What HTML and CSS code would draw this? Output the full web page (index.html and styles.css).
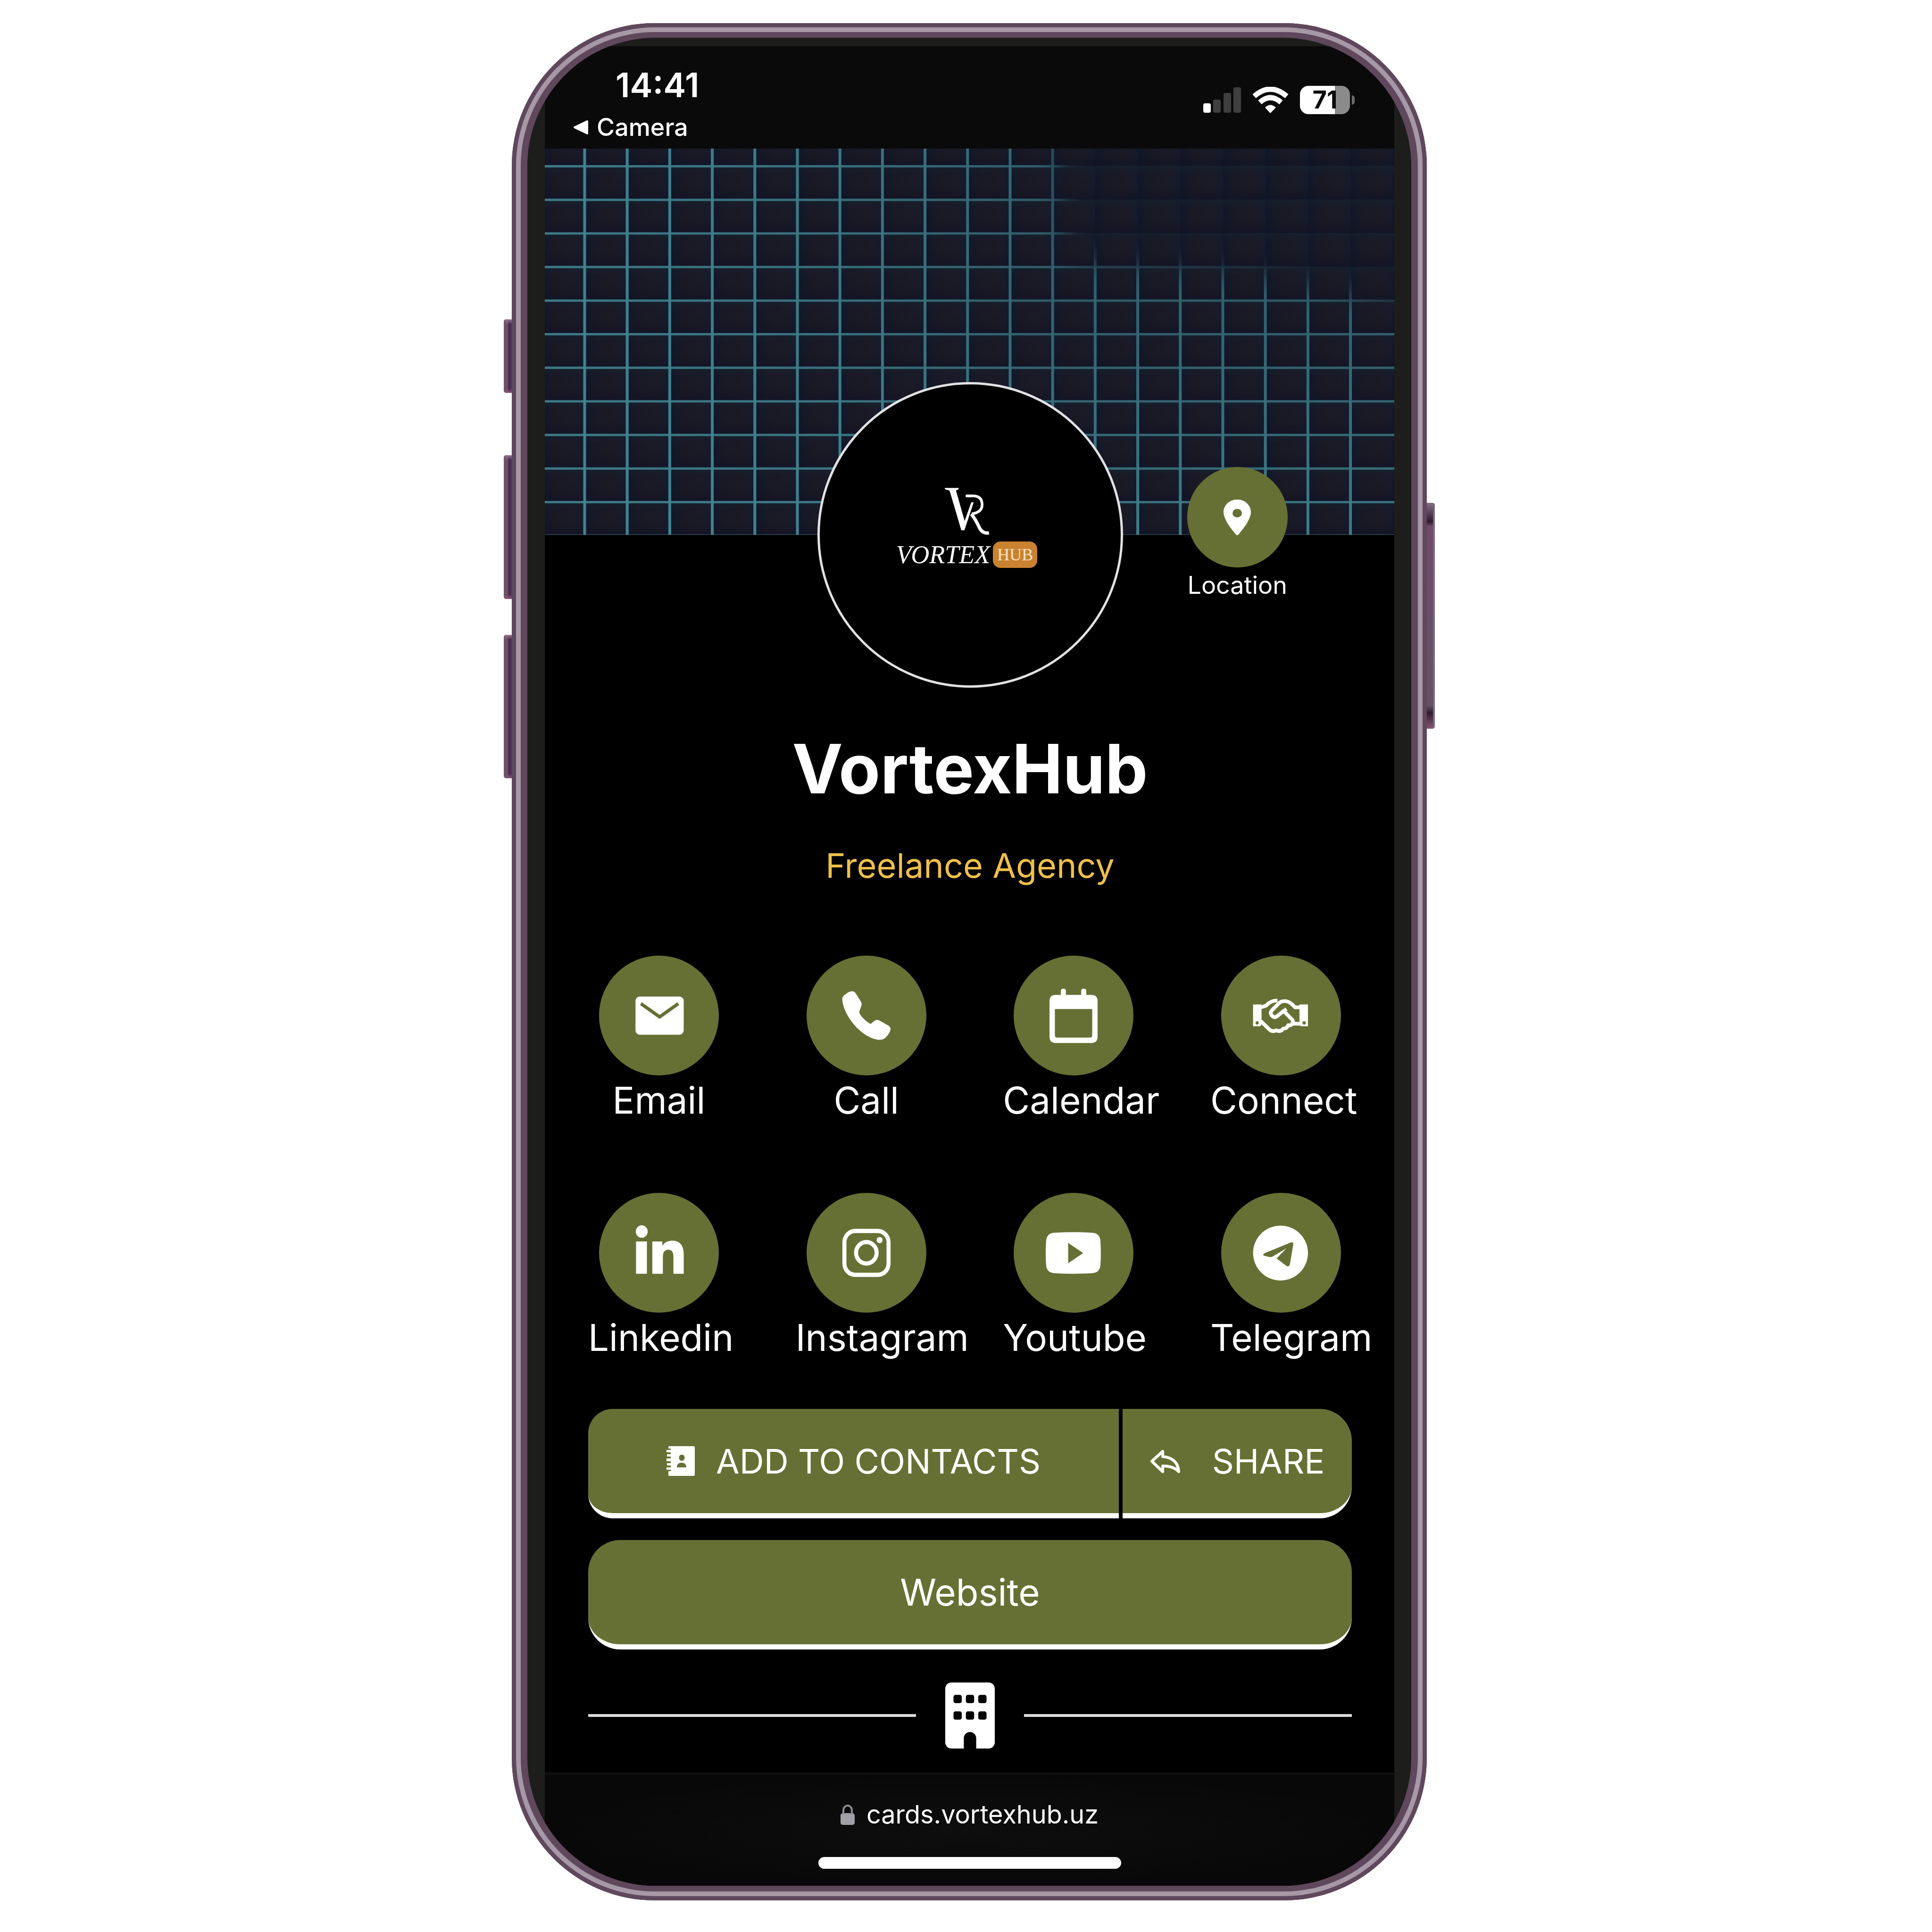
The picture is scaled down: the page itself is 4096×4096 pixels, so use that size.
FILE: index.html
```html
<!DOCTYPE html>
<html lang="en">
<head>
<meta charset="utf-8">
<meta name="viewport" content="width=device-width, initial-scale=1">
<title>VortexHub</title>
<link rel="stylesheet" href="styles.css">
</head>
<body>
<div class="phone">
  <span class="key key-mute"></span>
  <span class="key key-up"></span>
  <span class="key key-down"></span>
  <span class="key key-power"></span>
  <div class="bezel">
    <div class="screen">
      <header class="status">
        <div class="status-left">
          <time class="clock">14:41</time>
          <a class="back" href="#camera">
            <svg class="back-arrow" viewBox="0 0 33 34" aria-hidden="true"><path d="M3 17 30 4v26z" fill="#fff" stroke="#fff" stroke-width="4" stroke-linejoin="round"/></svg>
            Camera
          </a>
        </div>
        <div class="status-right">
          <svg class="signal" viewBox="0 0 80 54" aria-hidden="true">
            <rect x="0" y="34" width="16" height="20" rx="4" fill="#fff"/>
            <rect x="21" y="26" width="16" height="28" rx="4" fill="#3f3f40"/>
            <rect x="43" y="12" width="16" height="42" rx="4" fill="#3f3f40"/>
            <rect x="64" y="0" width="16" height="54" rx="4" fill="#3f3f40"/>
          </svg>
          <svg class="wifi" viewBox="0 0 77 56" aria-hidden="true">
            <g fill="none" stroke="#fff" stroke-width="11">
              <path d="M4 20Q38-10 73 20"/>
              <path d="M16 33Q38 13 61 33"/>
            </g>
            <path d="M27 44Q38 33 50 44L38 56z" fill="#fff"/>
          </svg>
          <div class="battery"><span class="battery-level">71</span></div>
        </div>
      </header>

      <svg class="cover" viewBox="0 0 1802 819" preserveAspectRatio="xMidYMid slice" aria-hidden="true">
        <defs>
          <linearGradient id="tileX" x1="0" x2="1" y1="0" y2="0">
            <stop offset="0" stop-color="#0e182a"/><stop offset=".25" stop-color="#191926"/>
            <stop offset=".75" stop-color="#1b1a27"/><stop offset="1" stop-color="#131c2d"/>
          </linearGradient>
          <linearGradient id="tileY" x1="0" x2="0" y1="0" y2="1">
            <stop offset="0" stop-color="#15232f" stop-opacity=".7"/><stop offset=".3" stop-color="#1b1a27" stop-opacity="0"/>
            <stop offset=".7" stop-color="#14121f" stop-opacity=".2"/><stop offset="1" stop-color="#101427" stop-opacity=".8"/>
          </linearGradient>
          <pattern id="tiles" x="85" y="37" width="90.2" height="71.2" patternUnits="userSpaceOnUse">
            <rect width="91" height="72" fill="url(#tileX)"/>
            <rect width="91" height="72" fill="url(#tileY)"/>
          </pattern>
          <pattern id="cols" x="82" y="0" width="90.2" height="819" patternUnits="userSpaceOnUse">
            <rect width="6" height="819" fill="#428593"/>
          </pattern>
          <pattern id="rows" x="0" y="35" width="1802" height="71.2" patternUnits="userSpaceOnUse">
            <rect width="1802" height="5" fill="#3d7987"/>
          </pattern>
          <linearGradient id="fade" x1="0" x2="1" y1="0" y2="0">
            <stop offset="0" stop-color="#fff"/><stop offset=".35" stop-color="#ddd"/><stop offset=".6" stop-color="#aaa"/><stop offset="1" stop-color="#aaa"/>
          </linearGradient>
          <linearGradient id="glow" x1="0" x2="0" y1="0" y2="1">
            <stop offset=".4" stop-color="#fff" stop-opacity="0"/><stop offset="1" stop-color="#fff" stop-opacity=".8"/>
          </linearGradient>
          <filter id="soft"><feGaussianBlur stdDeviation="26"/></filter>
          <mask id="lit" maskUnits="userSpaceOnUse" x="0" y="0" width="1802" height="819">
            <rect width="1802" height="819" fill="url(#fade)"/>
            <rect width="1802" height="819" fill="url(#glow)"/>
            <path d="M1080-90L1110 240 1500 265 1900 350V-90z" fill="#000" filter="url(#soft)"/>
          </mask>
        </defs>
        <rect width="1802" height="819" fill="url(#tiles)"/>
        <g mask="url(#lit)">
          <rect width="1802" height="819" fill="url(#rows)"/>
          <rect width="1790" height="819" fill="url(#cols)"/>
        </g>
      </svg>

      <main class="card">
        <section class="profile">
          <div class="avatar">
            <svg class="monogram" viewBox="685 545 203 215" aria-hidden="true">
              <path d="M687 546h62v6l-12 5 39 138 30-84h11l-42 126h-14L708 558l-21-6z" fill="#fff"/>
              <path d="M781 582h38q36 3 36 40 0 34-47 41" fill="none" stroke="#fff" stroke-width="12"/>
              <path d="M806 664q20 24 34 56 14 34 46 29" fill="none" stroke="#fff" stroke-width="15"/>
            </svg>
            <p class="wordmark"><em>VORTEX</em><span class="tag">HUB</span></p>
          </div>
          <a class="location" href="#location">
            <span class="dot dot-small"><svg class="pin" viewBox="5 2 14 20" preserveAspectRatio="none" aria-hidden="true"><path fill="#fff" fill-rule="evenodd" d="M12 2C8.130 2 5 5.130 5 9c0 5 6 12 6.500 12.700q.5.500 1 0C13 21 19 14 19 9c0-3.870-3.130-7-7-7zm0 10a2.300 2.300 0 0 1 0-4.800 2.300 2.300 0 0 1 0 4.800z"/></svg></span>
            <span class="location-label">Location</span>
          </a>
        </section>

        <h1 class="name">VortexHub</h1>
        <p class="role">Freelance Agency</p>

        <nav class="links">
          <a class="link" href="#email">
            <span class="dot"><svg class="glyph" viewBox="259 185 209 200" preserveAspectRatio="none" aria-hidden="true"><rect x="277" y="218" width="178" height="135" rx="16" fill="#fff"/><path d="M297 243l69 47 69-47" fill="none" stroke="#667034" stroke-width="12"/></svg></span>
            <span class="label">Email</span>
          </a>
          <a class="link" href="#call">
            <span class="dot"><svg class="glyph" viewBox="1025 185 209 200" preserveAspectRatio="none" aria-hidden="true"><path fill="#fff" d="M1052 210q11-10 24-11 9 0 14 8l19 29q5 9 1 17l-6 15q-3 7 3 15 15 20 38 32 12-11 20-14 7-2 15 3l31 17q9 6 7 15-4 14-18 27-9 8-22 8C1110 366 1040 280 1040 224q2-8 12-14z"/></svg></span>
            <span class="label">Call</span>
          </a>
          <a class="link" href="#calendar">
            <span class="dot"><svg class="glyph" viewBox="279 185 200 200" aria-hidden="true"><path fill="#fff" fill-rule="evenodd" d="M334 212v-14q0-8 9-8t9 8v14h54v-14q0-8 9-8t9 8v14h18q22 0 22 22v126q0 22-22 22H316q-22 0-22-22V234q0-22 22-22zM313 262v93q0 8 8 8h116q8 0 8-8v-93z"/></svg></span>
            <span class="label">Calendar</span>
          </a>
          <a class="link" href="#connect">
            <span class="dot"><svg class="glyph" viewBox="1011 185 200 200" aria-hidden="true">
              <path fill="#fff" fill-rule="evenodd" d="M1012 246h30v68q0 9-9 9h-21zm14 59a6 6 0 1 0 1 0zM1206 246h-30v68q0 9 9 9h21zm-14 59a6 6 0 1 0 1 0z"/>
              <g fill="none" stroke="#fff" stroke-width="13" stroke-linejoin="round">
                <path d="M1040 256l18-6q16-18 40-18"/>
                <path d="M1178 256h-18q-20-24-38-22-12 0-20 9l-24 24q-8 10 2 20 10 8 20-2l20-16 30 30q8 10-2 18-4 4-12 2-4 12-17 12-10 14-25 6-14 8-26-4l-26-26h-10"/>
                <path d="M1148 306l8 8h22"/>
                <path d="M1120 270l10-8"/>
              </g></svg></span>
            <span class="label">Connect</span>
          </a>
          <a class="link" href="#linkedin">
            <span class="dot"><svg class="glyph" viewBox="259 1023 209 200" preserveAspectRatio="none" aria-hidden="true"><circle cx="300" cy="1048" r="22" fill="#fff"/><path fill="#fff" d="M279 1083h40v114h-40zM339 1083h37v15q12-18 37-18 42 0 42 50v67h-38v-60q0-25-19-25-20 0-20 26v59h-39z"/></svg></span>
            <span class="label">Linkedin</span>
          </a>
          <a class="link" href="#instagram">
            <span class="dot"><svg class="glyph" viewBox="1025 1023 209 200" preserveAspectRatio="none" aria-hidden="true"><g fill="none" stroke="#fff" stroke-width="15"><rect x="1048" y="1046" width="163" height="155" rx="40"/><circle cx="1129" cy="1123" r="38"/></g><circle cx="1178" cy="1078" r="11" fill="#fff"/></svg></span>
            <span class="label">Instagram</span>
          </a>
          <a class="link" href="#youtube">
            <span class="dot"><svg class="glyph" viewBox="279 1023 200 200" aria-hidden="true"><path fill="#fff" fill-rule="evenodd" d="M312 1052q66-4 132 0 28 1 30 30 3 42 0 84-2 28-30 29-66 4-132 0-28-1-30-29-3-42 0-84 2-29 30-30zM360 1088v72l53-36z"/></svg></span>
            <span class="label">Youtube</span>
          </a>
          <a class="link" href="#telegram">
            <span class="dot"><svg class="glyph" viewBox="1011 1023 200 200" aria-hidden="true"><circle cx="1109" cy="1124" r="97" fill="#fff"/><path fill="#667034" d="M1048 1130q0-3 6-6l90-37q11-4 10 7l-12 70q-3 10-11 6l-36-27 35-36-48 29q-6 3-12 2l-17-4q-5-1-5-4z"/></svg></span>
            <span class="label">Telegram</span>
          </a>
        </nav>

        <div class="actions">
          <div class="split">
            <button class="btn btn-add" type="button">
              <svg class="book" viewBox="0 0 60 63" aria-hidden="true"><path fill="#fff" fill-rule="evenodd" d="M6 0h51q3 0 3 3v57q0 3-3 3H6q-2 0-2-3v-7h5v-3H0v-5h9v-4H1v-5h8v-4H0v-6h9v-4H1v-5h8v-4H0v-5h9v-3H4V3q0-3 2-3zm26 18a6 6.500 0 1 0 1 0zM22 45h20q0-10-10-10t-10 10z"/></svg>
              ADD TO CONTACTS
            </button>
            <button class="btn btn-share" type="button">
              <svg class="reply" viewBox="0 0 64 50" aria-hidden="true"><path d="M4 25 27 4v11q32 3 34 32-11-12-34-12v12z" fill="none" stroke="#fff" stroke-width="6" stroke-linejoin="round"/></svg>
              SHARE
            </button>
          </div>
          <a class="btn btn-site" href="#website">Website</a>
        </div>

        <div class="divider">
          <svg class="building" viewBox="0 0 384 512" aria-hidden="true"><path fill="#fff" d="M48 0C21.500 0 0 21.500 0 48V464c0 26.500 21.500 48 48 48h96V432c0-26.500 21.500-48 48-48s48 21.500 48 48v80h96c26.500 0 48-21.500 48-48V48c0-26.500-21.500-48-48-48z"/><g fill="#000"><rect x="64" y="96" width="64" height="64" rx="16"/><rect x="160" y="96" width="64" height="64" rx="16"/><rect x="256" y="96" width="64" height="64" rx="16"/><rect x="64" y="224" width="64" height="64" rx="16"/><rect x="160" y="224" width="64" height="64" rx="16"/><rect x="256" y="224" width="64" height="64" rx="16"/></g></svg>
        </div>
      </main>

      <footer class="browser-bar">
        <p class="address">
          <svg class="lock" viewBox="0 0 30 44" aria-hidden="true"><rect y="19" width="30" height="25" rx="5" fill="#a19fa8"/><path d="M6 22V13a9 10 0 0 1 18 0v9" fill="none" stroke="#8d8b94" stroke-width="4"/></svg>
          cards.vortexhub.uz
        </p>
        <div class="home-indicator"></div>
      </footer>
    </div>
  </div>
</div>
</body>
</html>
```
FILE: styles.css
```css
:root {
  --olive: #667034;
  --frame: #5f475c;
  --frame-light: #a798a7;
}

* {
  box-sizing: border-box;
}

body {
  margin: 0;
  padding: 49px 17px 66px 31px;
  background: #fff;
  color: #fff;
  font-family: "Inter", sans-serif;
}

a {
  color: inherit;
  text-decoration: none;
}

p,
h1 {
  margin: 0;
}

svg {
  display: block;
  flex: none;
}

/* Device frame */
.phone {
  position: relative;
  max-width: 1940px;
  margin: 0 auto;
  padding: 31px 33px;
  border-radius: 303px;
  background: var(--frame);
  box-shadow: inset 0 0 0 9px var(--frame), inset 0 0 0 19px var(--frame-light);
}

.bezel {
  padding: 18px 36px 0 37px;
  border-radius: 272px;
  background: #1d1d1b;
  overflow: hidden;
}

.screen {
  background: #000;
}

.key {
  position: absolute;
  left: -17px;
  width: 17px;
  border-left: 3px solid #6b5a6b;
  border-radius: 5px 0 0 5px;
  background:
    linear-gradient(#9a7591, transparent 10px, transparent calc(100% - 10px), #8a5578),
    linear-gradient(90deg, #714a6c 45%, #3f2640 50%, #55375a);
}

.key-mute {
  top: 628px;
  height: 156px;
}

.key-up {
  top: 916px;
  height: 305px;
}

.key-down {
  top: 1297px;
  height: 304px;
}

.key-power {
  top: 1017px;
  left: auto;
  right: -17px;
  height: 479px;
  border: 0;
  border-right: 4px solid #776b76;
  border-radius: 0 5px 5px 0;
  background: linear-gradient(#8a6a84, #2f1c31 40px, #714a6c 50px, #66506a 430px, #2f1c31 445px, #8a5578);
}

/* Status bar */
.status {
  display: flex;
  justify-content: space-between;
  padding: 32px 85px 5px 60px;
  background: #0a0a0a;
}

.clock {
  display: block;
  padding-left: 90px;
  font-size: 72px;
  font-weight: 600;
  line-height: 100px;
}

.back {
  display: flex;
  align-items: center;
  gap: 17px;
  font-size: 52px;
  font-weight: 500;
  line-height: 80px;
}

.back-arrow {
  width: 33px;
  height: 34px;
}

.status-right {
  display: flex;
  align-items: center;
  align-self: flex-start;
  gap: 24px;
  padding-top: 52px;
}

.signal {
  width: 80px;
  height: 54px;
}

.wifi {
  width: 77px;
  height: 56px;
}

.battery {
  position: relative;
  width: 106px;
  margin-right: 9px;
  border-radius: 18px;
  background: linear-gradient(90deg, #fff 70%, #8b8b8b 70%);
  color: #0a0a0a;
  text-align: center;
}

.battery::after {
  content: "";
  position: absolute;
  top: 20px;
  right: -10px;
  width: 6px;
  height: 20px;
  border-radius: 0 6px 6px 0;
  background: #6b6b6b;
}

.battery-level {
  font-size: 52px;
  font-weight: 700;
  line-height: 60px;
}

/* Card */
.cover {
  width: 100%;
  height: 819px;
}

.card {
  position: relative;
  padding: 0 90px 51px 92px;
}

.profile {
  display: grid;
  grid-template-columns: 1fr 648px 1fr;
  margin-top: -324px;
}

.avatar {
  grid-column: 2;
  display: flex;
  flex-direction: column;
  align-items: center;
  justify-content: center;
  gap: 13px;
  height: 648px;
  padding: 0 14px 30px 0;
  border: 5px solid #e2e2e4;
  border-radius: 50%;
  background: #000;
}

.monogram {
  width: 96px;
  height: 101px;
}

.wordmark {
  display: flex;
  align-items: center;
  gap: 6px;
  font-family: "Liberation Serif", serif;
  font-size: 54px;
  line-height: 56px;
}

.tag {
  padding: 0 9px;
  border-radius: 16px;
  background: #c9822f;
  color: #fbe6c4;
  font-size: 36px;
}

.location {
  display: flex;
  flex-direction: column;
  align-items: center;
  padding-top: 180px;
}

.dot {
  display: flex;
  align-items: center;
  justify-content: center;
  width: 254px;
  height: 254px;
  margin: 0 auto;
  border-radius: 50%;
  background: var(--olive);
}

.dot-small {
  width: 213px;
  height: 213px;
  margin: 0;
}

.pin {
  width: 58px;
  height: 76px;
}

.location-label {
  font-size: 52px;
  line-height: 76px;
}

.name {
  margin-top: 92px;
  font-size: 144px;
  font-weight: 700;
  line-height: 160px;
  text-align: center;
}

.role {
  margin-top: 75px;
  color: #eec04a;
  font-size: 72px;
  line-height: 100px;
  text-align: center;
}

.links {
  display: grid;
  grid-template-columns: repeat(4, 300px);
  justify-content: space-between;
  row-gap: 143px;
  margin-top: 141px;
}

.glyph {
  width: 120px;
  height: 120px;
}

.label {
  display: block;
  font-size: 78px;
  line-height: 106px;
  text-align: center;
  white-space: nowrap;
}

/* Buttons */
.actions {
  display: grid;
  gap: 46px;
  margin-top: 98px;
}

.split {
  display: grid;
  grid-template-columns: 1126fr 486fr;
  gap: 8px;
}

.btn {
  display: flex;
  align-items: center;
  justify-content: center;
  padding: 60px 0;
  border: 0;
  border-bottom: 11px solid #fff;
  border-radius: 68px;
  background: var(--olive);
  color: #fff;
  font-family: inherit;
  font-size: 72px;
  line-height: 101px;
  white-space: nowrap;
}

.btn-add {
  gap: 45px;
  border-radius: 52px 0 0 52px;
}

.btn-share {
  gap: 68px;
  border-radius: 0 68px 68px 0;
}

.btn-site {
  font-size: 78px;
}

.book {
  width: 60px;
  height: 63px;
}

.reply {
  width: 64px;
  height: 50px;
}

.divider {
  display: flex;
  align-items: center;
  gap: 62px;
  margin-top: 70px;
}

.divider::before,
.divider::after {
  content: "";
  flex: 1;
  height: 6px;
  background: #d9d9d9;
}

.building {
  width: 105px;
  height: 140px;
}

/* Browser bar */
.browser-bar {
  padding: 45px 0 36px;
  border-top: 4px solid #121212;
  background: radial-gradient(closest-side, #0e0e0e, #080808);
}

.address {
  display: flex;
  align-items: center;
  justify-content: center;
  gap: 25px;
  font-size: 54px;
  line-height: 80px;
}

.lock {
  width: 30px;
  height: 44px;
}

.home-indicator {
  width: 642px;
  height: 25px;
  margin: 50px auto 0;
  border-radius: 13px;
  background: #fff;
}
```
